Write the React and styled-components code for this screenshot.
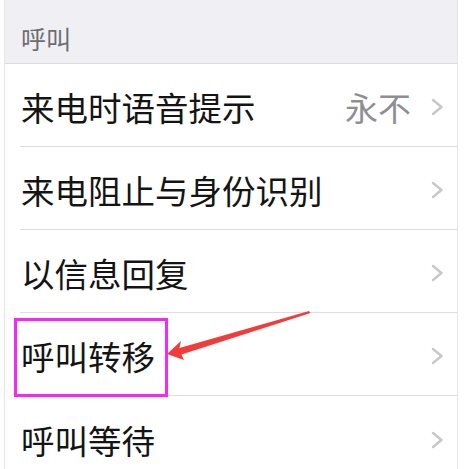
import React from "react";
import styled, { createGlobalStyle } from "styled-components";

const GlobalStyle = createGlobalStyle`
  html, body {
    margin: 0;
    padding: 0;
    background: #ffffff;
  }
  body {
    font-family: "Noto Sans CJK SC", "Noto Sans", sans-serif;
  }
`;

const Page = styled.div`
  position: relative;
  width: 465px;
  height: 469px;
  overflow: hidden;
  background: #ffffff;
`;

const Panel = styled.div`
  margin-left: 4px;
  width: 452px;
  height: 100%;
  border-left: 1px solid #e6e6ea;
  border-right: 1px solid #e6e6ea;
  background: #ffffff;
`;

const SectionHeader = styled.div`
  height: 64px;
  box-sizing: border-box;
  padding: 21px 0 0 16px;
  background: #efeff4;
  border-bottom: 1px solid #dcdce0;
  color: #6d6d72;
  font-size: 25px;
  line-height: 34px;
`;

const List = styled.div`
  display: flex;
  flex-direction: column;
`;

const Row = styled.div`
  padding-left: 15px;
`;

const RowInner = styled.div`
  height: 83px;
  display: flex;
  align-items: center;
  padding: 4px 13px 0 1px;
  box-sizing: border-box;
  border-bottom: ${(props) => (props.$last ? "none" : "1px solid #dedee2")};
`;

const Label = styled.span`
  flex: 1;
  color: #141414;
  font-size: 33.5px;
  line-height: 40px;
`;

const Value = styled.span`
  color: #8e8e93;
  font-size: 33px;
  line-height: 40px;
  margin-right: 20px;
`;

const Chevron = styled.svg`
  width: 13px;
  height: 18px;
  flex-shrink: 0;
`;

const Highlight = styled.div`
  position: absolute;
  left: 14px;
  top: 318px;
  width: 154px;
  height: 79px;
  box-sizing: border-box;
  border: 3px solid #f528f5;
`;

const Arrow = styled.svg`
  position: absolute;
  left: 0;
  top: 0;
  width: 465px;
  height: 469px;
  pointer-events: none;
`;

const items = [
  { label: "来电时语音提示", value: "永不" },
  { label: "来电阻止与身份识别" },
  { label: "以信息回复" },
  { label: "呼叫转移" },
  { label: "呼叫等待" },
];

const ChevronIcon = () => (
  <Chevron viewBox="0 0 13 18">
    <polyline
      points="2,2 10.5,9 2,16"
      fill="none"
      stroke="#c7c7cc"
      strokeWidth="2.4"
      strokeLinecap="round"
      strokeLinejoin="round"
    />
  </Chevron>
);

const App = () => {
  return (
    <Page>
      <GlobalStyle />
      <Panel>
        <SectionHeader>呼叫</SectionHeader>
        <List>
          {items.map((item, i) => (
            <Row key={item.label}>
              <RowInner $last={i === items.length - 1}>
                <Label>{item.label}</Label>
                {item.value && <Value>{item.value}</Value>}
                <ChevronIcon />
              </RowInner>
            </Row>
          ))}
        </List>
      </Panel>
      <Highlight />
      <Arrow viewBox="0 0 465 469">
        <polygon
          points="167,354 181,341 179.5,348 309,311 310.5,313 181.5,354.5 184,360"
          fill="#f43b3b"
        />
      </Arrow>
    </Page>
  );
};

export default App;
